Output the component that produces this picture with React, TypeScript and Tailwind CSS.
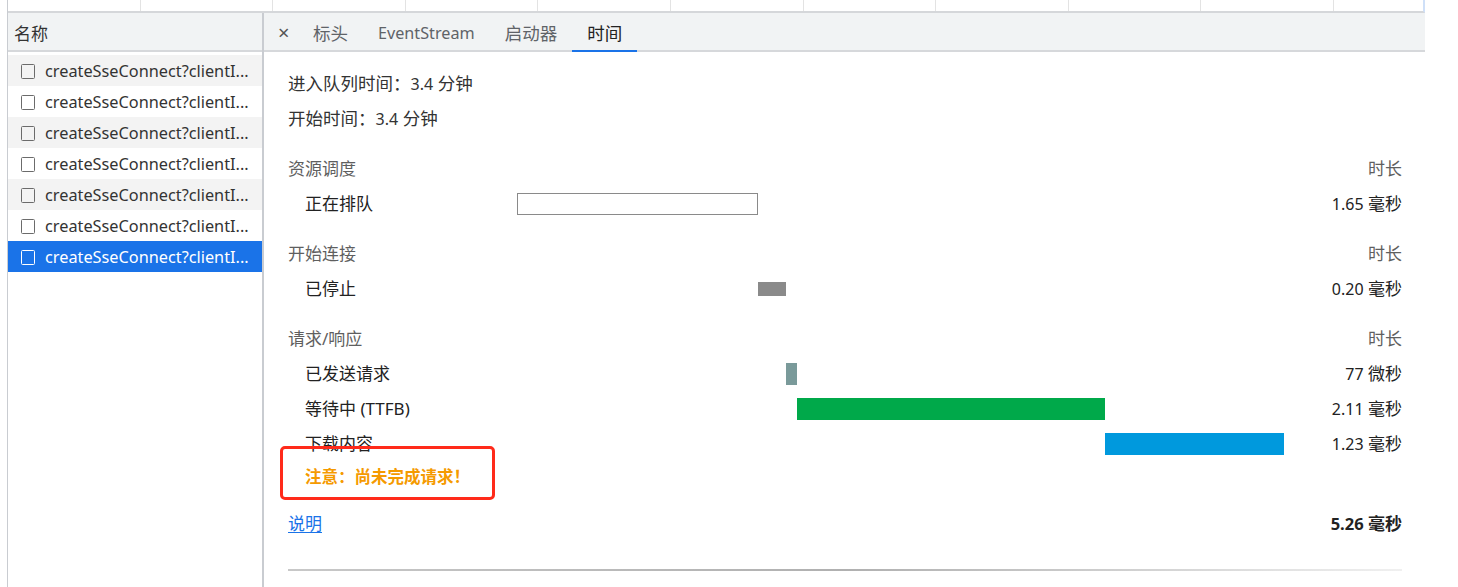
import React from "react";

const font = { fontFamily: '"Noto Sans", "Noto Sans CJK SC", sans-serif' };

function CheckboxIcon({ selected }: { selected?: boolean }) {
  return (
    <svg width="14" height="15" viewBox="0 0 14 15" className="shrink-0">
      <rect
        x="0.5"
        y="0.5"
        width="13"
        height="14"
        rx="1"
        fill="none"
        stroke={selected ? "#ffffff" : "#6b6b6b"}
        strokeWidth="1"
      />
    </svg>
  );
}

const rows = [0, 1, 2, 3, 4, 5, 6];

type TimingRow = {
  label: string;
  left: number;
  width: number;
  kind: "outline" | "gray" | "teal" | "green" | "blue";
  dur: string;
};

function Bar({ row }: { row: TimingRow }) {
  const cls =
    row.kind === "outline"
      ? "h-[22px] border border-[#8a8a8a] bg-white"
      : row.kind === "gray"
      ? "h-[14px] bg-[#8a8a8a]"
      : row.kind === "teal"
      ? "h-[22px] bg-[#7a9a9a]"
      : row.kind === "green"
      ? "h-[22px] bg-[#00a94a]"
      : "h-[22px] bg-[#0099dd]";
  return (
    <div className="relative flex h-[22px] flex-1 items-center">
      <div className={cls + " absolute"} style={{ left: row.left, width: row.width }} />
    </div>
  );
}

function Section({ title, items, gapTop }: { title: string; items: TimingRow[]; gapTop?: boolean }) {
  return (
    <div className={"flex flex-col" + (gapTop ? " mt-[15px]" : "")}>
      <div className="flex h-[35px] items-center justify-between text-[17px] text-[#5f5f5f]">
        <span>{title}</span>
        <span>时长</span>
      </div>
      {items.map((it) => (
        <div key={it.label} className="flex h-[35px] items-center text-[17px] text-[#222]">
          <span className="w-[229px] whitespace-nowrap pl-[17px]">{it.label}</span>
          <Bar row={it} />
          <span className="w-[110px] whitespace-nowrap text-right">
            <span className="text-[16px]">{it.dur.split(" ")[0]}</span> {it.dur.split(" ")[1]}
          </span>
        </div>
      ))}
    </div>
  );
}

export default function App() {
  return (
    <div className="relative flex h-[587px] w-[1458px] overflow-hidden bg-white" style={font}>
      <div className="w-[7px] shrink-0 bg-white" />
      <div className="flex w-[1418px] shrink-0 flex-col border-l border-[#c9ccd1]">
        {/* top strip */}
        <div className="flex h-[13px] shrink-0 border-b-2 border-r-2 border-b-[#d5d7da] border-r-[#cfe0f8]">
          {Array.from({ length: 11 }).map((_, i) => (
            <div
              key={i}
              className={"h-full " + (i < 10 ? "w-[132.6px] border-r border-[#e3e3e3]" : "flex-1")}
            />
          ))}
        </div>
        <div className="flex min-h-0 flex-1">
          {/* left list */}
          <div className="flex w-[256px] shrink-0 flex-col border-r-2 border-[#c9ccd1]">
            <div className="flex h-[39px] items-center border-b-2 border-[#d6d8db] bg-[#f1f3f4] pl-[6px] pt-[4px] text-[17px] text-[#333]">
              名称
            </div>
            <div className="h-[3px]" />
            {rows.map((i) => {
              const selected = i === 6;
              const bg = selected ? "bg-[#1a73e8]" : i % 2 === 0 ? "bg-[#f3f3f3]" : "bg-white";
              return (
                <div
                  key={i}
                  className={
                    "flex h-[31px] items-center gap-[10px] pl-[13px] pt-[1px] text-[16.3px] " +
                    bg +
                    (selected ? " text-white" : " text-[#333]")
                  }
                >
                  <CheckboxIcon selected={selected} />
                  <span className="whitespace-nowrap">createSseConnect?clientI...</span>
                </div>
              );
            })}
          </div>
          {/* right panel */}
          <div className="flex min-w-0 flex-1 flex-col">
            <div className="flex h-[39px] shrink-0 items-end border-b-2 border-[#d6d8db] bg-[#f1f3f4] text-[17.5px] text-[#5f6368]">
              <div className="flex h-full w-[34px] items-center pl-[14px] pt-[3px] text-[20px] text-[#555]">×</div>
              <div className="flex h-full items-center px-[15px] pt-[4px]">标头</div>
              <div className="flex h-full items-center px-[15px] pt-[4px] text-[16.2px]">EventStream</div>
              <div className="flex h-full items-center px-[15px] pt-[4px]">启动器</div>
              <div className="relative flex h-full items-center px-[15px] pt-[4px] text-[#222]">
                时间
                <div className="absolute bottom-[-2px] left-0 right-0 h-[2px] bg-[#1a73e8]" />
              </div>
            </div>
            <div className="flex flex-col pl-[24px] pr-[23px] pt-[14px]">
              <div className="flex h-[35px] items-center text-[17.5px] text-[#333]">
                进入队列时间：<span className="text-[16px]">3.4</span>&nbsp;分钟
              </div>
              <div className="flex h-[35px] items-center text-[17.5px] text-[#333]">
                开始时间：<span className="text-[16px]">3.4</span>&nbsp;分钟
              </div>
              <div className="h-[15px]" />
              <Section
                title="资源调度"
                items={[{ label: "正在排队", left: 0, width: 241, kind: "outline", dur: "1.65 毫秒" }]}
              />
              <Section
                gapTop
                title="开始连接"
                items={[{ label: "已停止", left: 241, width: 28, kind: "gray", dur: "0.20 毫秒" }]}
              />
              <Section
                gapTop
                title="请求/响应"
                items={[
                  { label: "已发送请求", left: 269, width: 11, kind: "teal", dur: "77 微秒" },
                  { label: "等待中 (TTFB)", left: 280, width: 308, kind: "green", dur: "2.11 毫秒" },
                  { label: "下载内容", left: 588, width: 179, kind: "blue", dur: "1.23 毫秒" },
                ]}
              />
              <div className="-mt-[1px] flex h-[35px] items-center pl-[17px] text-[16.5px] font-bold text-[#f59a00]">
                注意：尚未完成请求！
              </div>
              <div className="h-[11px]" />
              <div className="flex h-[35px] items-center justify-between text-[17px]">
                <span className="text-[#1a73e8] underline underline-offset-2">说明</span>
                <span className="font-bold text-[#222]">
                  <span className="text-[16.5px]">5.26</span> 毫秒
                </span>
              </div>
              <div className="h-[28px]" />
              <div className="h-[2px] w-full bg-gradient-to-r from-[#c8c8c8] via-[#b0b0b0] to-[#f0f0f0]" />
            </div>
          </div>
        </div>
      </div>
      <div className="flex-1 bg-white" />
      {/* red annotation box */}
      <div className="absolute left-[280px] top-[446px] h-[54px] w-[215px] rounded-[5px] border-[3px] border-[#ff2a1a]" />
    </div>
  );
}
